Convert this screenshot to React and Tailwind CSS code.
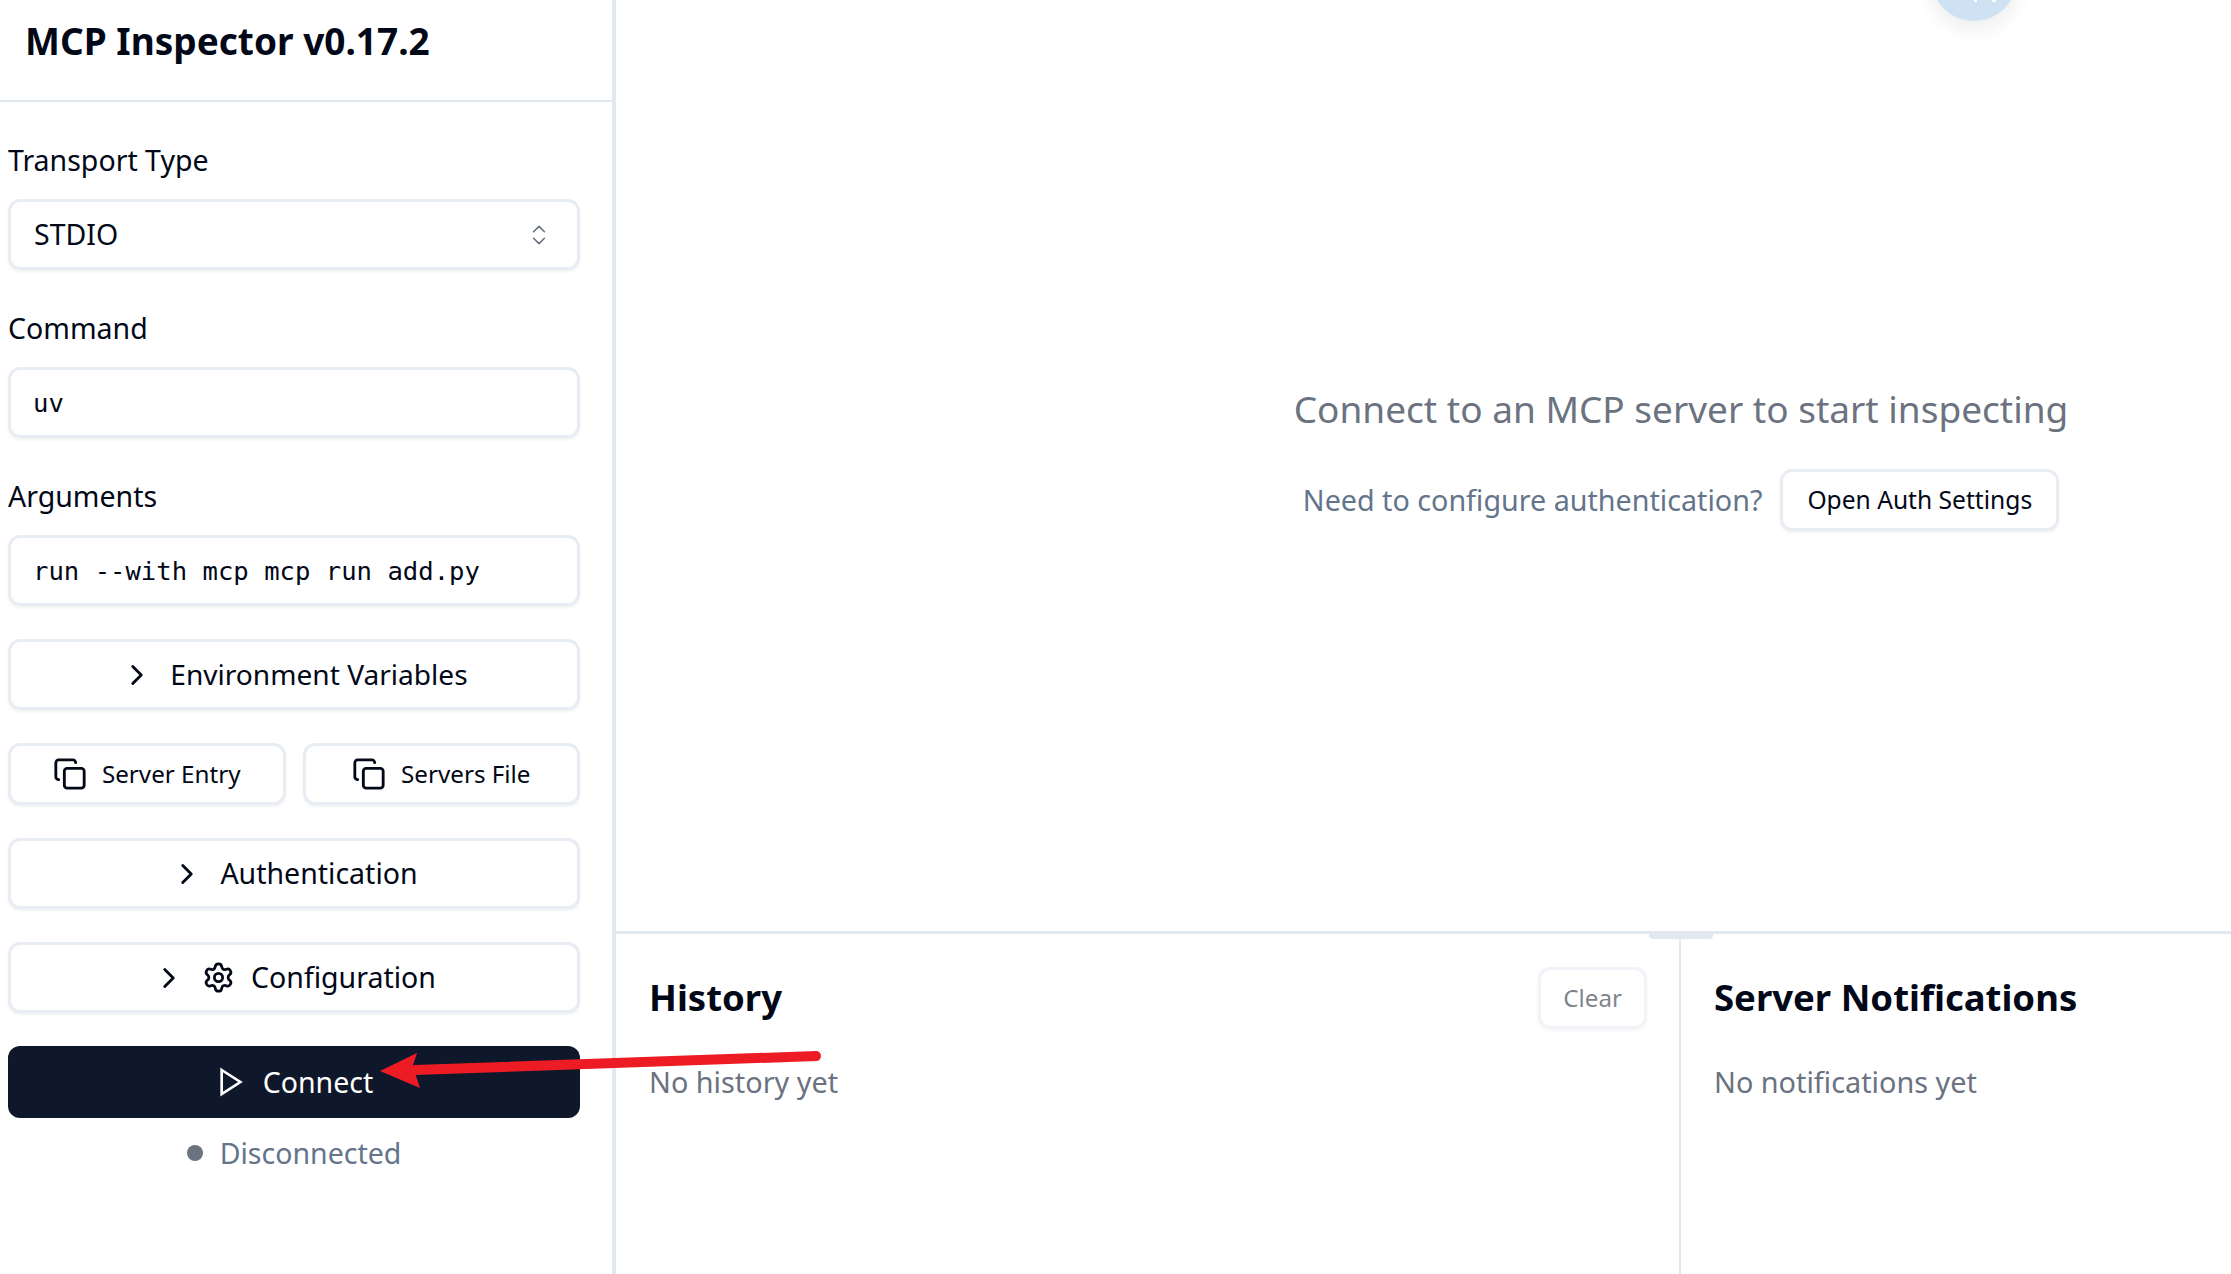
import React from "react";
import { ChevronRight, ChevronsUpDown, Copy, Settings } from "lucide-react";

const sans = "font-['Noto_Sans',sans-serif]";

const Field = ({ label, children }) => (
  <div className="flex flex-col">
    <div className="h-[38px] flex items-center text-[28.5px] text-[#020817] leading-none">{label}</div>
    <div className="mt-[20px]">{children}</div>
  </div>
);

const boxClass =
  "flex items-center h-[71px] rounded-[12px] border-[3px] border-[#e8edf4] bg-white shadow-[0_2px_3px_rgba(15,23,42,0.05)]";

const CollapseButton = ({ children }) => (
  <button className={`${boxClass} w-full justify-center gap-[16px] text-[28.5px] text-[#020817]`}>
    {children}
  </button>
);

const App = () => {
  return (
    <div className={`${sans} relative flex h-[1274px] w-[2231px] overflow-hidden bg-white`}>
      <aside className="flex flex-col w-[616px] shrink-0 border-r-4 border-[#e2e8f0]">
        <div className="flex items-center h-[102px] pl-[25px] pb-[18px] border-b-2 border-[#e2e8f0]">
          <h1 className="text-[37px] font-bold text-[#020817]">MCP Inspector v0.17.2</h1>
        </div>

        <div className="flex flex-col pl-[8px] pr-[32px] pt-[39px]">
          <Field label="Transport Type">
            <div className={`${boxClass} justify-between pl-[23px] pr-[25px] text-[28.5px] text-[#020817]`}>
              STDIO
              <ChevronsUpDown size={26} strokeWidth={1.5} className="text-[#6b7280]" />
            </div>
          </Field>

          <div className="mt-[39px]">
            <Field label="Command">
              <div className={`${boxClass} pl-[22px] pt-[1px] font-['DejaVu_Sans_Mono',monospace] text-[25.6px] text-[#020817]`}>
                uv
              </div>
            </Field>
          </div>

          <div className="mt-[39px]">
            <Field label="Arguments">
              <div className={`${boxClass} pl-[22px] pt-[1px] font-['DejaVu_Sans_Mono',monospace] text-[25.6px] text-[#020817]`}>
                run --with mcp mcp run add.py
              </div>
            </Field>
          </div>

          <div className="mt-[33px]">
            <CollapseButton>
              <ChevronRight size={34} />
              <span className="text-[28.1px]">Environment Variables</span>
            </CollapseButton>
          </div>

          <div className="grid grid-cols-2 gap-[17px] mt-[33px]">
            <button className={`${boxClass} !h-[62px] justify-center gap-[15px] text-[24.2px] text-[#020817]`}>
              <Copy size={34} strokeWidth={2} />
              Server Entry
            </button>
            <button className={`${boxClass} !h-[62px] justify-center gap-[15px] text-[24.2px] text-[#020817]`}>
              <Copy size={34} strokeWidth={2} />
              Servers File
            </button>
          </div>

          <div className="mt-[33px]">
            <CollapseButton>
              <ChevronRight size={34} />
              Authentication
            </CollapseButton>
          </div>

          <div className="mt-[33px]">
            <CollapseButton>
              <ChevronRight size={34} />
              <Settings size={33} />
              Configuration
            </CollapseButton>
          </div>

          <button className="flex items-center justify-center gap-[16px] h-[72px] mt-[33px] rounded-[12px] bg-[#0f172a] text-[28.5px] text-white">
            <svg width="32" height="32" viewBox="0 0 24 24" fill="none" stroke="currentColor" strokeWidth="2">
              <polygon points="5 3 19 12 5 21 5 3" />
            </svg>
            Connect
          </button>

          <div className="flex items-center justify-center gap-[17px] mt-[16px] text-[28.5px] text-[#64748b] leading-none h-[38px]">
            <span className="w-[16px] h-[16px] rounded-full bg-[#6b7280]" />
            Disconnected
          </div>
        </div>
      </aside>

      {/* main area runs past the right edge of the window */}
      <main className="flex flex-col w-[2130px] shrink-0">
        <div className="flex flex-col items-center justify-center h-[931px] pb-[10px]">
          <h2 className="text-[37px] text-[#6b7280] leading-none">Connect to an MCP server to start inspecting</h2>
          <div className="flex items-center gap-[18px] mt-[42px]">
            <span className="text-[28.7px] text-[#64748b]">Need to configure authentication?</span>
            <button className="flex items-center h-[62px] px-[24px] rounded-[12px] border-[3px] border-[#e8edf4] bg-white shadow-[0_2px_3px_rgba(15,23,42,0.05)] text-[24.6px] text-[#020817]">
              Open Auth Settings
            </button>
          </div>
        </div>

        <div className="relative flex-1 grid grid-cols-2 border-t-[3px] border-[#e2e8f0]">
          <div className="absolute left-1/2 top-[-3px] -translate-x-1/2 w-[64px] h-[8px] rounded-full bg-[#e2e8f0]" />
          <section className="pl-[33px] pr-[32px] pt-[33px] border-r-2 border-[#e2e8f0]">
            <div className="flex items-start justify-between">
              <h3 className="mt-[12px] text-[36.5px] font-bold text-[#020817] leading-none">History</h3>
              <button className="flex items-center h-[62px] px-[22px] rounded-[12px] border-[3px] border-[#e2e8f0] opacity-50 shadow-[0_2px_3px_rgba(15,23,42,0.06)] text-[24.2px] text-[#020817]">
                Clear
              </button>
            </div>
            <p className="mt-[31px] text-[28.8px] text-[#6b7280]">No history yet</p>
          </section>
          <section className="px-[33px] pt-[33px]">
            <h3 className="mt-[12px] text-[36.5px] font-bold text-[#020817] leading-none">Server Notifications</h3>
            <p className="mt-[44px] text-[28.8px] text-[#6b7280]">No notifications yet</p>
          </section>
        </div>
      </main>

      {/* floating button cut off by the top edge */}
      <div className="absolute left-[1931px] top-[-65px] w-[86px] h-[86px] rounded-full bg-[#cfe2f3] shadow-[0_8px_20px_rgba(15,23,42,0.08)]">
        <span className="absolute left-[43px] top-[65px] w-[3px] h-[2px] bg-white" />
        <span className="absolute left-[61px] top-[65px] w-[4px] h-[2px] bg-white" />
      </div>

      {/* red annotation arrow */}
      <svg className="absolute left-0 top-0 pointer-events-none" width="2231" height="1274" fill="none">
        <polygon points="380,1071 417,1053 413,1065 416,1076 420,1088" fill="#ed1c24" />
        <line x1="816" y1="1056" x2="415" y2="1070" stroke="#ed1c24" strokeWidth="10" strokeLinecap="round" />
      </svg>
    </div>
  );
};

export default App;
